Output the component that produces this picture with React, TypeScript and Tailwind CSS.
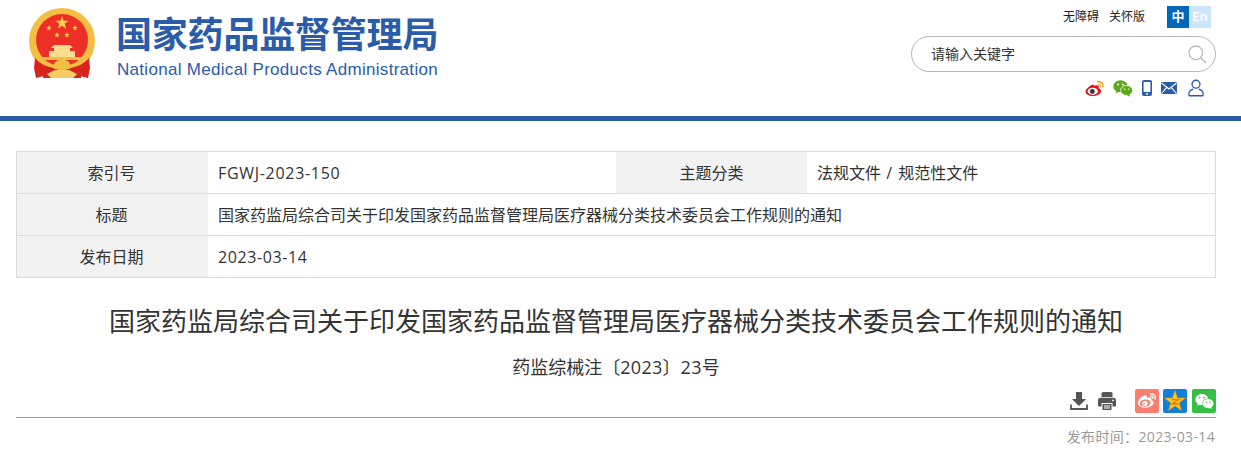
import { FaWeibo, FaWeixin } from 'react-icons/fa';

const pageFont = '"Open Sans", "Noto Sans CJK SC", sans-serif';

function star(cx: number, cy: number, r: number) {
  const pts: string[] = [];
  for (let i = 0; i < 10; i++) {
    const rad = i % 2 === 0 ? r : r * 0.4;
    const a = -Math.PI / 2 + (i * Math.PI) / 5;
    pts.push(`${(cx + rad * Math.cos(a)).toFixed(2)},${(cy + rad * Math.sin(a)).toFixed(2)}`);
  }
  return pts.join(' ');
}

// 国徽
function Emblem() {
  return (
    <svg width="66" height="70" viewBox="0 0 66 70" className="block">
      <circle cx="33" cy="33" r="33" fill="#f3bf42" />
      <circle cx="33" cy="32" r="26" fill="#ee2f26" />
      <polygon points={star(33, 15, 7)} fill="#fbd34d" />
      <polygon points={star(20, 20, 3)} fill="#fbd34d" />
      <polygon points={star(46, 20, 3)} fill="#fbd34d" />
      <polygon points={star(28, 27, 3)} fill="#fbd34d" />
      <polygon points={star(38, 27, 3)} fill="#fbd34d" />
      {/* gate */}
      <path d="M25 37 H41 L44 40 H41 V43 H46 V49 H20 V43 H25 V40 H22 Z" fill="#fbdc8e" />
      <path d="M11 49 H55 L57 52 H9 Z" fill="#f3bf42" />
      {/* ribbons */}
      <path d="M6 50 C11 56 18 59 25 60 L23 66 L7 70 L5 60 Z" fill="#d9231d" />
      <path d="M60 50 C55 56 48 59 41 60 L43 66 L59 70 L61 60 Z" fill="#d9231d" />
      <path d="M14 59 C20 62 46 62 52 59 L52 70 H14 Z" fill="#d9231d" />
      <ellipse cx="33" cy="57" rx="8" ry="5.5" fill="#f3bf42" />
      <path d="M18 66 L26 62 H40 L48 66 L44 70 H22 Z" fill="#f6cd62" />
    </svg>
  );
}

function ColorWeibo() {
  return (
    <svg width="20" height="17" viewBox="0 0 21 17" className="block">
      <path d="M8.5 4.2C4.5 5.6 0.5 9 0.6 12c0.1 3 4 4.6 8 4.4 4.7-.3 8.3-2.8 8.3-5.4 0-1.9-2-2.5-2.7-2.8.7-1.6.3-3-2-3.1-1 0-2.4.4-2.6.6.2-1-.2-1.2-1.1-.5Z" fill="#e2151d" />
      <ellipse cx="8.2" cy="11.5" rx="5.4" ry="3.7" fill="#f7f7f7" />
      <circle cx="7.7" cy="11.6" r="2.6" fill="#3a3a3a" />
      <path d="M13.5 1.6c3-.8 5.8 1.7 5.3 5" fill="none" stroke="#f0a11f" strokeWidth="1.7" strokeLinecap="round" />
      <path d="M14 4.4c1.3-.3 2.3.7 2.1 2" fill="none" stroke="#f0a11f" strokeWidth="1.2" strokeLinecap="round" />
    </svg>
  );
}

function ColorWechat() {
  return (
    <svg width="20" height="17" viewBox="0 0 20 17" className="block">
      <ellipse cx="7.5" cy="6.2" rx="7.2" ry="6" fill="#5da71a" />
      <path d="M3.5 10 L3 13.5 L7 11 Z" fill="#5da71a" />
      <ellipse cx="13.6" cy="10.5" rx="6" ry="5" fill="#5da71a" stroke="#fff" strokeWidth="0.8" />
      <path d="M16.5 14 L17 16.8 L13.8 15 Z" fill="#5da71a" />
      <circle cx="5" cy="4.6" r="1" fill="#fff" />
      <circle cx="9.8" cy="4.6" r="1" fill="#fff" />
      <circle cx="11.6" cy="9.2" r="0.8" fill="#fff" />
      <circle cx="15.6" cy="9.2" r="0.8" fill="#fff" />
    </svg>
  );
}

function PhoneIcon() {
  return (
    <svg width="10" height="16" viewBox="0 0 10 16" className="block">
      <rect x="0" y="0" width="10" height="16" rx="2" fill="#2a5caa" />
      <rect x="1.6" y="2" width="6.8" height="10" fill="#fff" />
      <circle cx="5" cy="14" r="1" fill="#fff" />
    </svg>
  );
}

function MailIcon() {
  return (
    <svg width="16" height="12" viewBox="0 0 16 12" className="block">
      <rect width="16" height="12" rx="1" fill="#2a5caa" />
      <path d="M0.5 1 L8 7 L15.5 1 M0.5 11.5 L5.6 5.6 M15.5 11.5 L10.4 5.6" fill="none" stroke="#fff" strokeWidth="1.1" />
    </svg>
  );
}

function UserIcon() {
  return (
    <svg width="16" height="18" viewBox="0 0 17 18" className="block">
      <circle cx="8.5" cy="5" r="4.2" fill="none" stroke="#2a5caa" strokeWidth="1.4" />
      <path d="M1 17.2v-2.4c0-2.4 2.6-4.2 4.6-4.5M16 17.2v-2.4c0-2.4-2.6-4.2-4.6-4.5M1 17.2h15" fill="none" stroke="#2a5caa" strokeWidth="1.4" strokeLinejoin="round" />
    </svg>
  );
}

function SearchGlyph() {
  return (
    <svg width="19" height="19" viewBox="0 0 19 19" className="block">
      <circle cx="7.8" cy="7.8" r="6.8" fill="none" stroke="#bdbdbd" strokeWidth="1.3" />
      <path d="M12.8 12.8 L18 18" stroke="#bdbdbd" strokeWidth="1.6" />
    </svg>
  );
}

function DownloadIcon() {
  return (
    <svg width="18" height="18" viewBox="0 0 18 18" className="block">
      <path d="M6 0h6v7h4l-7 7-7-7h4Z" fill="#555" />
      <path d="M1 12.5V17h16v-4.5" fill="none" stroke="#555" strokeWidth="1.8" />
    </svg>
  );
}

function PrintIcon() {
  return (
    <svg width="18" height="18" viewBox="0 0 18 18" className="block">
      <path d="M3.5 5V1.5A1.5 1.5 0 0 1 5 0h8a1.5 1.5 0 0 1 1.5 1.5V5Z" fill="#555" />
      <path d="M2.5 5.8h13A2.5 2.5 0 0 1 18 8.3v5.2a1 1 0 0 1-1 1h-2.5V11h-11v3.5H1a1 1 0 0 1-1-1V8.3a2.5 2.5 0 0 1 2.5-2.5Z" fill="#555" />
      <path d="M4.5 12h9v6h-9Z" fill="#555" />
      <path d="M6 13.6h6v1H6Zm0 2h6v1H6Z" fill="#fff" />
      <circle cx="15" cy="8.4" r="0.9" fill="#fff" />
    </svg>
  );
}

function QzoneIcon() {
  return (
    <div className="flex h-6 w-6 items-center justify-center rounded-[2px] bg-[#0f7fdb]">
      <svg width="22" height="22" viewBox="0 0 22 22" className="block">
        <polygon points={star(11, 11.5, 11)} fill="#fcc71e" stroke="#e0900f" strokeWidth="0.6" />
        <path d="M7.5 9.5h7L8.5 14h6" fill="none" stroke="#e8820c" strokeWidth="1.6" />
      </svg>
    </div>
  );
}

function InfoTable() {
  const label = 'border-y border-[#dcdcdc] bg-[#f2f2f2] text-center font-normal';
  const firstLabel = 'border-y border-[#dcdcdc] bg-[#f2f2f2] pr-[2px] text-center font-normal';
  const value = 'border-y border-[#dcdcdc] px-[10px] text-left font-normal';
  return (
    <div className="ml-4 w-[1200px] border-x border-[#dcdcdc]">
      <table className="w-full table-fixed border-collapse text-base text-[#333]">
        <colgroup>
          <col className="w-[191px]" />
          <col className="w-[408px]" />
          <col className="w-[191px]" />
          <col />
        </colgroup>
        <tbody>
          <tr className="h-[42px]">
            <th className={firstLabel}>索引号</th>
            <td className={value}>
              <span className="tracking-[0.7px]">FGWJ-2023-150</span>
            </td>
            <th className={label}>主题分类</th>
            <td className={value}>
              法规文件<span className="tracking-[1px]"> / </span>规范性文件
            </td>
          </tr>
          <tr className="h-[42px]">
            <th className={firstLabel}>标题</th>
            <td className={value} colSpan={3}>
              国家药监局综合司关于印发国家药品监督管理局医疗器械分类技术委员会工作规则的通知
            </td>
          </tr>
          <tr className="h-[42px]">
            <th className={firstLabel}>发布日期</th>
            <td className={value} colSpan={3}>
              <span className="tracking-[0.6px]">2023-03-14</span>
            </td>
          </tr>
        </tbody>
      </table>
    </div>
  );
}

export default function App() {
  return (
    <div className="h-[453px] w-[1241px] overflow-hidden bg-white" style={{ fontFamily: pageFont }}>
      {/* Header */}
      <header className="flex h-[121px] justify-between border-b-[5px] border-[#2a5caa] pr-[25px] pl-[29px]">
        <div className="flex items-start pt-[8px]">
          <Emblem />
          <div className="ml-[22px] flex w-[322px] flex-col pt-[4px]">
            <div className="-ml-px text-[36px] leading-[40px] font-bold tracking-[-0.2px] whitespace-nowrap text-[#2a5caa] [font-family:'Noto_Sans_CJK_SC',sans-serif]">
              国家药品监督管理局
            </div>
            <div className="mt-[8px] text-[17px] leading-[20px] tracking-[0.3px] whitespace-nowrap text-[#2a5caa] [font-family:'Liberation_Sans',sans-serif]">
              National Medical Products Administration
            </div>
          </div>
        </div>

        <div className="flex w-[305px] flex-col items-end pt-[6px]">
          <div className="flex h-[22px] items-center pr-[5px] text-xs text-[#222]">
            <span>无障碍</span>
            <span className="ml-[10px]">关怀版</span>
            <span className="ml-[22px] flex h-[22px] w-[22px] items-center justify-center bg-[#0068bb] text-[13px] font-semibold text-white">中</span>
            <span className="flex h-[22px] w-[22px] items-center justify-center bg-[#cce6fd] text-[13px] font-semibold text-white">En</span>
          </div>
          <div className="mt-[8px] flex h-[36px] w-[305px] items-center justify-between rounded-[18px] border border-[#b5b5b5] pr-[8px] pl-[19px] text-sm text-[#333]">
            <span>请输入关键字</span>
            <SearchGlyph />
          </div>
          <div className="mt-[7px] flex h-[18px] items-center pr-[12px]">
            <ColorWeibo />
            <span className="ml-[8px]"><ColorWechat /></span>
            <span className="ml-[9px]"><PhoneIcon /></span>
            <span className="ml-[9px]"><MailIcon /></span>
            <span className="ml-[11px]"><UserIcon /></span>
          </div>
        </div>
      </header>

      <div className="h-[30px]" />
      <InfoTable />

      {/* Title */}
      <h1 className="mt-[25px] ml-4 w-[1200px] text-center text-[26px] leading-[36px] font-normal text-[#333]">
        国家药监局综合司关于印发国家药品监督管理局医疗器械分类技术委员会工作规则的通知
      </h1>
      <div className="mt-[14px] ml-4 w-[1200px] text-center text-lg leading-[28px] text-[#333]">
        药监综械注〔<span className="tracking-[0.3px]">2023</span>〕<span className="tracking-[0.3px]">23</span>号
      </div>

      {/* Share bar */}
      <div className="mt-[5px] ml-4 flex h-[32px] w-[1200px] items-start justify-end border-b border-[#999]">
        <span className="mt-[6px]"><DownloadIcon /></span>
        <span className="mt-[6px] ml-[10px]"><PrintIcon /></span>
        <span className="mt-[3px] ml-[19px] flex h-6 w-6 items-center justify-center rounded-[2px] bg-[#fa7d6e] text-[18px] text-white"><FaWeibo /></span>
        <span className="mt-[3px] ml-[4px]"><QzoneIcon /></span>
        <span className="mt-[3px] ml-[5px] flex h-6 w-6 items-center justify-center rounded-[2px] bg-[#35bf44] text-[19px] text-white"><FaWeixin /></span>
      </div>
      <div className="mt-[9px] ml-4 w-[1199px] text-right text-sm leading-[20px] tracking-[0.35px] text-[#999]">发布时间：2023-03-14</div>
    </div>
  );
}
